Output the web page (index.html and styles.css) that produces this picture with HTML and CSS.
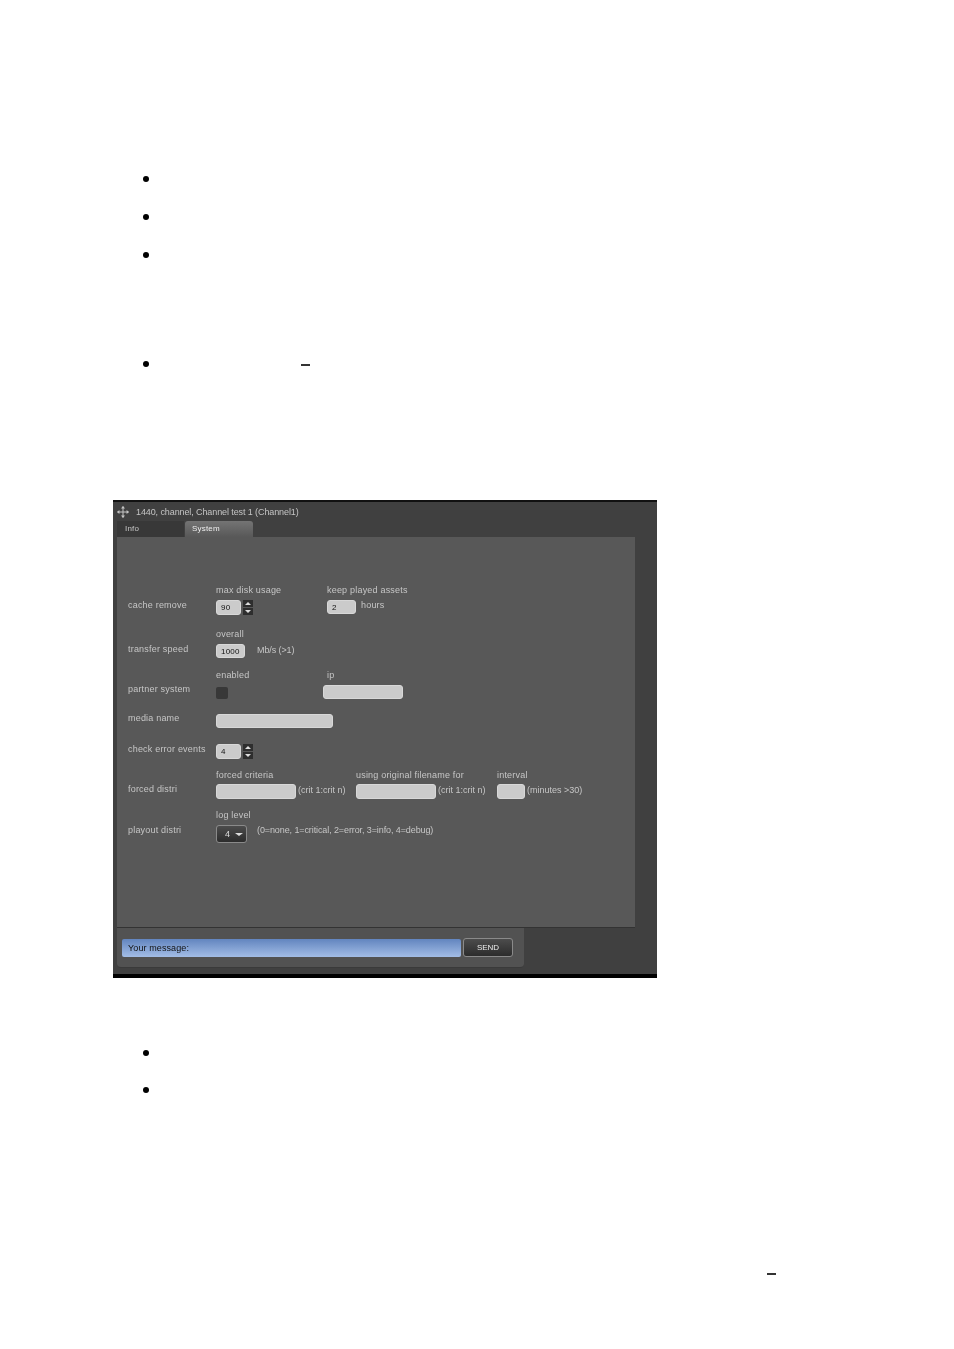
FILE: index.html
```html
<!DOCTYPE html>
<html lang="en">
  <head>
    <meta charset="UTF-8" />
    <title>Channel settings</title>
    <link rel="stylesheet" href="styles.css">
  </head>
  <body>
    <ul class="bullets first">
      <li></li>
      <li></li>
      <li></li>
    </ul>
    <ul class="bullets second">
      <li><span class="dash"></span></li>
    </ul>

    <div class="panel">
      <div class="title">
        <svg class="move" width="12" height="12" viewBox="0 0 12 12">
          <path d="M6 0.5V11.5M0.5 6H11.5" stroke="#c4c4c4" stroke-width="1" fill="none" />
          <path d="M6 0L8 2.4H4ZM6 12L4 9.6H8ZM0 6L2.4 4V8ZM12 6L9.6 8V4Z" fill="#c4c4c4" />
        </svg>
        1440, channel, Channel test 1 (Channel1)
      </div>
      <div class="tabs">
        <div class="tab">Info</div>
        <div class="tab active">System</div>
      </div>
      <div class="content">
        <div class="row row1">
          <div class="name">cache remove</div>
          <div class="field w111">
            <div class="caption">max disk usage</div>
            <div class="control">
              <div class="input small">90</div>
              <div class="spinner"><span class="up"></span><span class="down"></span></div>
            </div>
          </div>
          <div class="field">
            <div class="caption">keep played assets</div>
            <div class="control">
              <div class="input mid">2</div>
              <span class="note hours">hours</span>
            </div>
          </div>
        </div>

        <div class="row row2">
          <div class="name">transfer speed</div>
          <div class="field">
            <div class="caption">overall</div>
            <div class="control">
              <div class="input mid">1000</div>
              <span class="note mbs">Mb/s (&gt;1)</span>
            </div>
          </div>
        </div>

        <div class="row row3">
          <div class="name">partner system</div>
          <div class="field w107">
            <div class="caption">enabled</div>
            <div class="control"><div class="checkbox"></div></div>
          </div>
          <div class="field ipfield">
            <div class="caption">ip</div>
            <div class="control"><div class="input ip"></div></div>
          </div>
        </div>

        <div class="row row4">
          <div class="name">media name</div>
          <div class="input media"></div>
        </div>

        <div class="row row5">
          <div class="name">check error events</div>
          <div class="control">
            <div class="input small">4</div>
            <div class="spinner"><span class="up"></span><span class="down"></span></div>
          </div>
        </div>

        <div class="row row6">
          <div class="name">forced distri</div>
          <div class="field w140">
            <div class="caption">forced criteria</div>
            <div class="control">
              <div class="input wide"></div>
              <span class="note tight">(crit 1:crit n)</span>
            </div>
          </div>
          <div class="field w141">
            <div class="caption">using original filename for</div>
            <div class="control">
              <div class="input wide"></div>
              <span class="note tight">(crit 1:crit n)</span>
            </div>
          </div>
          <div class="field">
            <div class="caption">interval</div>
            <div class="control">
              <div class="input interval"></div>
              <span class="note tight">(minutes &gt;30)</span>
            </div>
          </div>
        </div>

        <div class="row row7">
          <div class="name lifted">playout distri</div>
          <div class="field">
            <div class="caption">log level</div>
            <div class="control">
              <div class="select">4 <span class="caret"></span></div>
              <span class="note levels">(0=none, 1=critical, 2=error, 3=info, 4=debug)</span>
            </div>
          </div>
        </div>
      </div>
      <div class="chat">
        <div class="message">Your message:</div>
        <div class="send">SEND</div>
      </div>
    </div>

    <ul class="bullets third">
      <li></li>
      <li></li>
    </ul>
    <div class="lastdash"><span class="dash"></span></div>
  </body>
</html>
```

FILE: styles.css
```css
body {
  margin: 0;
  background-color: white;
  font-family: "Liberation Sans", Arial, sans-serif;
}
ul {
  margin: 0;
  padding: 0;
  list-style: none;
}
.bullets {
  margin-left: 143px;
}
.bullets li {
  display: flex;
  align-items: center;
  height: 38px;
}
.bullets li::before {
  content: "";
  width: 6px;
  height: 6px;
  border-radius: 50%;
  background-color: black;
}
.first {
  margin-top: 160px;
}
.second {
  margin-top: 71px;
}
.second .dash {
  margin-left: 152px;
  margin-top: 2px;
}
.third {
  margin-top: 56px;
}
.third li {
  height: 37px;
}
.dash {
  display: block;
  width: 9px;
  height: 2px;
  background-color: #333;
}
.lastdash {
  margin: 165px 0 0 767px;
}

/* panel */
.panel {
  display: flex;
  flex-direction: column;
  margin: 117px 0 0 113px;
  width: 544px;
  height: 478px;
  box-sizing: border-box;
  background-color: #404040;
  border-top: 2px solid #111;
  border-bottom: 4px solid #000;
  color: #c6c6c6;
  font-size: 9px;
  letter-spacing: 0.2px;
  filter: blur(0.35px);
}
.title {
  display: flex;
  align-items: center;
  gap: 7px;
  height: 19px;
  padding-left: 4px;
  font-size: 9px;
  letter-spacing: -0.1px;
  color: #c4c4c4;
}
.tabs {
  display: flex;
  gap: 1px;
  height: 16px;
  margin-left: 4px;
}
.tab {
  width: 59px;
  padding-left: 8px;
  line-height: 16px;
  font-size: 8px;
  background-color: #383838;
}
.tab.active {
  width: 61px;
  padding-left: 7px;
  background: linear-gradient(#747474, #585858);
  border-radius: 3px 3px 0 0;
  color: #eee;
}
.content {
  box-sizing: border-box;
  width: 518px;
  height: 391px;
  margin-left: 4px;
  padding: 48px 0 0 11px;
  background-color: #585858;
  border-bottom: 1px solid #333;
}
.row {
  display: flex;
  align-items: flex-end;
}
.row2 {
  margin-top: 14px;
}
.row3 {
  margin-top: 11px;
}
.row4 {
  margin-top: 14px;
}
.row5 {
  margin-top: 16px;
}
.row6 {
  margin-top: 11px;
}
.row7 {
  margin-top: 11px;
}
.name {
  width: 88px;
  height: 15px;
  line-height: 11px;
}
.lifted {
  height: 18px;
}
.field {
  display: flex;
  flex-direction: column;
}
.w107 {
  width: 107px;
}
.w111 {
  width: 111px;
}
.w140 {
  width: 140px;
}
.w141 {
  width: 141px;
}
.caption {
  height: 11px;
  line-height: 11px;
  margin-bottom: 4px;
  white-space: nowrap;
}
.row3 .caption,
.row6 .caption {
  margin-bottom: 3px;
}
.row3 .ipfield .caption {
  margin-left: 4px;
  margin-bottom: 4px;
}
.row3 .ipfield .control {
  min-height: 14px;
}
.control {
  display: flex;
  align-items: center;
  min-height: 15px;
}
.input {
  box-sizing: border-box;
  height: 15px;
  padding-left: 4px;
  line-height: 13px;
  font-size: 8px;
  color: #111;
  background-color: #cbcbcb;
  border: 1px solid #d8d8d8;
  border-radius: 3px;
}
.small {
  width: 25px;
}
.mid {
  width: 29px;
  height: 14px;
  align-self: flex-start;
}
.ip {
  width: 80px;
  height: 14px;
}
.media {
  width: 117px;
  height: 14px;
}
.wide {
  width: 80px;
}
.interval {
  width: 28px;
}
.spinner {
  display: flex;
  flex-direction: column;
  gap: 1px;
  width: 10px;
  height: 15px;
  margin-left: 2px;
}
.spinner span {
  flex: 1;
  background-color: #2e2e2e;
  position: relative;
}
.spinner span::after {
  content: "";
  position: absolute;
  left: 2px;
  top: 2px;
  border-left: 3px solid transparent;
  border-right: 3px solid transparent;
}
.spinner .up::after {
  border-bottom: 3px solid #ddd;
}
.spinner .down::after {
  border-top: 3px solid #ddd;
}
.note {
  white-space: nowrap;
  line-height: 12px;
  margin-top: -3px;
}
.hours {
  margin-left: 5px;
  margin-top: -5px;
}
.mbs {
  margin-left: 12px;
  letter-spacing: -0.1px;
}
.tight {
  margin-left: 2px;
  letter-spacing: 0;
}
.levels {
  margin-left: 10px;
  margin-top: -8px;
  letter-spacing: -0.1px;
}
.checkbox {
  width: 12px;
  height: 12px;
  margin-top: 3px;
  background-color: #383838;
  border-radius: 2px;
}
.select {
  box-sizing: border-box;
  display: flex;
  align-items: center;
  gap: 5px;
  width: 31px;
  height: 18px;
  padding-left: 8px;
  background: linear-gradient(#4c4c4c, #2c2c2c);
  border: 1px solid #8a8a8a;
  border-radius: 3px;
  color: #ddd;
}
.caret {
  border-left: 4px solid transparent;
  border-right: 4px solid transparent;
  border-top: 3px solid #ddd;
}

/* message bar */
.chat {
  box-sizing: border-box;
  display: flex;
  align-items: flex-start;
  gap: 2px;
  width: 407px;
  height: 40px;
  margin-left: 4px;
  padding: 11px 0 0 5px;
  background-color: #525252;
  border-bottom: 1px solid #3a3a3a;
  border-radius: 0 0 4px 4px;
}
.message {
  box-sizing: border-box;
  width: 339px;
  height: 18px;
  padding-left: 6px;
  line-height: 18px;
  letter-spacing: 0.1px;
  color: #111;
  background: linear-gradient(#6285bf, #a3bde6);
  border-radius: 2px;
}
.send {
  box-sizing: border-box;
  width: 50px;
  height: 19px;
  margin-top: -1px;
  text-align: center;
  line-height: 17px;
  font-size: 8px;
  letter-spacing: 0;
  color: #eee;
  background: linear-gradient(#4c4c4c, #2c2c2c);
  border: 1px solid #8a8a8a;
  border-radius: 3px;
}
```
